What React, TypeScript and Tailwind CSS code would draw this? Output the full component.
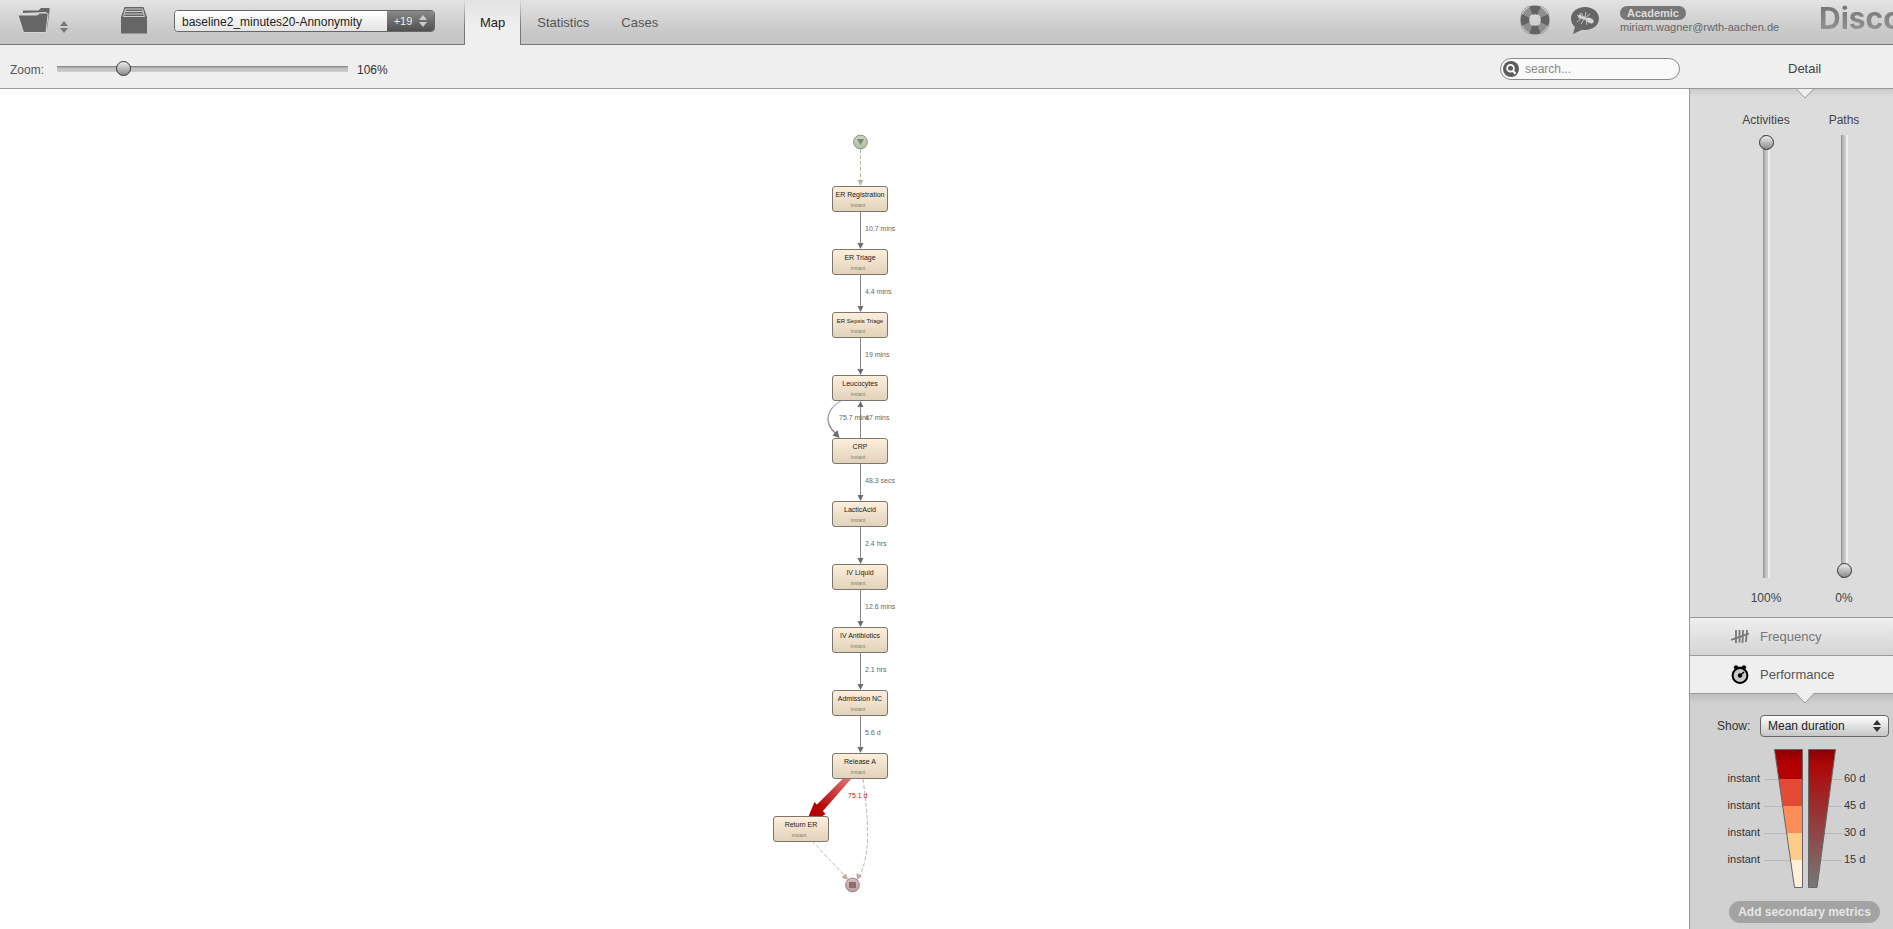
import { useState } from "react";

type ActivityNode = { name: string; x: number; y: number; small?: boolean };
type EdgeLabel = { text: string; x: number; y: number; strong?: boolean };

const nodes: ActivityNode[] = [
  { name: "ER Registration", x: 60, y: 97 },
  { name: "ER Triage", x: 60, y: 160 },
  { name: "ER Sepsis Triage", x: 60, y: 223, small: true },
  { name: "Leucocytes", x: 60, y: 286 },
  { name: "CRP", x: 60, y: 349 },
  { name: "LacticAcid", x: 60, y: 412 },
  { name: "IV Liquid", x: 60, y: 475 },
  { name: "IV Antibiotics", x: 60, y: 538 },
  { name: "Admission NC", x: 60, y: 601 },
  { name: "Release A", x: 60, y: 664 },
  { name: "Return ER", x: 1, y: 727 },
];

const edgeLabels: EdgeLabel[] = [
  { text: "10.7 mins", x: 93, y: 136 },
  { text: "4.4 mins", x: 93, y: 199 },
  { text: "19 mins", x: 93, y: 262 },
  { text: "75.7 mins", x: 67, y: 325 },
  { text: "47 mins", x: 93, y: 325 },
  { text: "48.3 secs", x: 93, y: 388 },
  { text: "2.4 hrs", x: 93, y: 451 },
  { text: "12.6 mins", x: 93, y: 514 },
  { text: "2.1 hrs", x: 93, y: 577 },
  { text: "5.6 d", x: 93, y: 640 },
  { text: "75.1 d", x: 76, y: 703, strong: true },
];

const straightEdges = [
  [123, 160],
  [186, 223],
  [249, 286],
  [375, 412],
  [438, 475],
  [501, 538],
  [564, 601],
  [627, 664],
];

function FolderIcon() {
  return (
    <svg width="32" height="26" viewBox="0 0 32 26" fill="#666" aria-hidden="true">
      <path d="M5 5V2.500h15.500L23 0h8.500v3L29 22 28 4z" />
      <path d="M0 7h19.500l2-2H29l1 1.500L28 24.500H5.500z" stroke="#d6d6d6" />
    </svg>
  );
}

function ArchiveIcon() {
  return (
    <svg width="26" height="27" viewBox="0 0 26 27" aria-hidden="true">
      <path d="M3.500 0h19L26 10v16.500H0V10z" fill="#666" />
      <path d="M4.500 2h17M4 4.500h18M3.500 7h19M2.500 9.500h21" stroke="#cfcfcf" fill="none" />
      <path d="M4.500 2 2.500 9.500M21.500 2l2 7.500" stroke="#cfcfcf" />
    </svg>
  );
}

function UpDown({ className }: { className: string }) {
  return (
    <svg width="8" height="12" viewBox="0 0 8 12" className={className} fill="currentColor" aria-hidden="true">
      <path d="M4 0l4 5H0zM4 12l4-5H0z" />
    </svg>
  );
}

function LifebuoyIcon() {
  return (
    <svg width="30" height="30" viewBox="0 0 30 30" fill="none" aria-hidden="true">
      <rect x="1" y="1" width="28" height="28" rx="11" stroke="#999" />
      <circle cx="15" cy="15" r="10" stroke="#8f8f8f" strokeWidth="7.500" />
      <path
        d="M11 5.800a10 10 0 0 1 8 0M24.200 11a10 10 0 0 1 0 8M19 24.200a10 10 0 0 1-8 0M5.800 19a10 10 0 0 1 0-8"
        stroke="#636363"
        strokeWidth="8.500"
      />
    </svg>
  );
}

function BugBubbleIcon() {
  return (
    <svg width="28" height="27" viewBox="0 0 28 27" fill="none" aria-hidden="true">
      <path d="M14 0c8 0 14 5 14 11.500S22 23 14 23c-1 0-2 0-3-.3L2 27l2-7C1.500 18 0 15 0 11.500 0 5 6 0 14 0z" fill="#666" />
      <path
        d="M12 10 10.500 6M14 10l1-5M15 10l4-3M11 11l-5 4M13 12l-3 5M15 13l1 5M8 9 6 8M9 8l.5-2"
        stroke="#d6d6d6"
        strokeWidth="0.800"
      />
      <g fill="#d6d6d6">
        <circle cx="9" cy="9.700" r="1.900" />
        <ellipse cx="13" cy="11" rx="2.800" ry="1.500" transform="rotate(18 13 11)" />
        <ellipse cx="18.800" cy="13.500" rx="4" ry="2.500" transform="rotate(24 18.800 13.500)" />
      </g>
    </svg>
  );
}

function SearchIcon() {
  return (
    <svg width="16" height="16" viewBox="0 0 16 16" fill="none" className="shrink-0" aria-hidden="true">
      <circle cx="8" cy="8" r="8" fill="#5c5c5c" />
      <circle cx="7.500" cy="7.300" r="3.400" stroke="#fff" strokeWidth="1.800" />
      <path d="m10 10 2.500 2.700" stroke="#fff" strokeWidth="2" />
    </svg>
  );
}

function TallyIcon() {
  return (
    <svg width="18" height="15" viewBox="0 0 18 15" fill="none" stroke="#777" aria-hidden="true">
      <path d="M5 1v13M8.500 1v12.500M12 1l-.5 13M16 1l-1 12" strokeWidth="1.800" />
      <path d="M0 11 18 4.500" strokeWidth="1.800" />
    </svg>
  );
}

function StopwatchIcon() {
  return (
    <svg width="18" height="19" viewBox="0 0 18 19" fill="none" aria-hidden="true">
      <circle cx="5" cy="2.300" r="2.100" fill="#000" />
      <circle cx="13" cy="2.300" r="2.100" fill="#000" />
      <path d="M5 2.500h8" stroke="#000" strokeWidth="1.500" />
      <circle cx="9" cy="10.500" r="7.400" fill="#c9c9c9" stroke="#000" strokeWidth="2" />
      <circle cx="9" cy="10.500" r="2.200" fill="#000" />
      <path d="M9 10.500 13 7" stroke="#000" strokeWidth="1.500" />
    </svg>
  );
}

function Notch() {
  return (
    <svg
      width="20"
      height="11"
      viewBox="0 0 20 11"
      className="absolute -top-px left-1/2 -translate-x-1/2"
      aria-hidden="true"
    >
      <path d="M1 0h18l-9 10z" fill="#efefef" />
      <path d="M1 .5l9 9.500 9-9.500" fill="none" stroke="#999" />
    </svg>
  );
}

function ProcessMap() {
  return (
    <div className="relative h-[820px] w-[145px]">
      <svg width="145" height="820" viewBox="0 0 145 820" fill="none" className="absolute inset-0" aria-hidden="true">
        <defs>
          <linearGradient id="start" x1="0" y1="0" x2="0" y2="1">
            <stop offset="0" stopColor="#ccd4bd" />
            <stop offset="1" stopColor="#b3bda3" />
          </linearGradient>
          <linearGradient id="end" x1="0" y1="0" x2="0" y2="1">
            <stop offset="0" stopColor="#d8bcbc" />
            <stop offset="1" stopColor="#bf9f9f" />
          </linearGradient>
          <linearGradient id="hot" gradientUnits="userSpaceOnUse" x1="76" y1="688" x2="48" y2="720">
            <stop offset="0" stopColor="#de7474" />
            <stop offset="1" stopColor="#b40000" />
          </linearGradient>
          <linearGradient id="loop" x1="0" y1="0" x2="0" y2="1">
            <stop offset="0" stopColor="#bbb" />
            <stop offset="1" stopColor="#6c6c6c" />
          </linearGradient>
        </defs>

        <circle cx="88.500" cy="53" r="6.900" fill="url(#start)" stroke="#8c9482" />
        <path d="M85 50h7l-3.500 6z" fill="#7f8771" />
        <path d="M88.500 60v31" stroke="#aebb9c" strokeDasharray="4 2" />
        <path d="M85.500 91h6l-3 6z" fill="#aebb9c" />

        {straightEdges.map(([from, to]) => (
          <g key={from}>
            <path d={`M88.500 ${from}V${to - 5}`} stroke="#8a8a8a" />
            <path d={`M85.500 ${to - 6}h6l-3 6z`} fill="#6c6c6c" />
          </g>
        ))}

        <path d="M88.500 349v-32" stroke="#8a8a8a" />
        <path d="M85.500 318h6l-3-6z" fill="#6c6c6c" />
        <path d="M70 311C53 321 52 334 64 345" stroke="url(#loop)" strokeWidth="1.200" />
        <path d="m60.500 346.500 5-5.500 2 8z" fill="#6c6c6c" />

        <path d="M71.500 689h8.500L50.500 722.500l-6.500-6z" fill="url(#hot)" />
        <path d="M42.500 713l11 12-9 6H35z" fill="#b40000" />

        <path d="M40 752 74 788" stroke="#c6b4b0" strokeDasharray="4 2" />
        <path d="m76 791-6.500-2.500 4.500-4z" fill="#bba9a4" />
        <path d="M91 690C97 735 98 766 88 786" stroke="#c6b0b0" strokeDasharray="4 2" />
        <path d="m85 791-.5-7 5.500 3z" fill="#bba9a4" />
        <circle cx="80.500" cy="796" r="6.900" fill="url(#end)" stroke="#988888" />
        <rect x="77" y="793" width="7" height="6" fill="#8d6e6e" />
      </svg>

      {nodes.map((node) => (
        <div
          key={node.name}
          className="absolute flex h-[26px] w-14 flex-col items-center rounded-[3px] border border-[#7d766c] bg-linear-to-b from-[#fdefdc] to-[#e2d2bb] pt-1"
          style={{ left: node.x, top: node.y }}
        >
          <span className={`whitespace-nowrap leading-[8px] text-[#222] ${node.small ? "text-[6px]" : "text-[7px]"}`}>
            {node.name}
          </span>
          <span className="pt-[3px] pr-1 text-[5px] leading-[6px] text-[#857b6f]">instant</span>
        </div>
      ))}

      {edgeLabels.map((label) => (
        <span
          key={label.text}
          className={`absolute whitespace-nowrap text-[7px] leading-[8px] ${
            label.strong ? "text-[#b02020]" : "text-[#666]"
          }`}
          style={{ left: label.x, top: label.y }}
        >
          {label.text}
        </span>
      ))}
    </div>
  );
}

const thumb =
  "[&::-webkit-slider-thumb]:appearance-none [&::-webkit-slider-thumb]:size-[15px] [&::-webkit-slider-thumb]:rounded-full [&::-webkit-slider-thumb]:border [&::-webkit-slider-thumb]:border-[#333] [&::-webkit-slider-thumb]:bg-linear-to-b [&::-webkit-slider-thumb]:from-[#eee] [&::-webkit-slider-thumb]:to-[#8c8c8c]";

function DetailSlider({ label, initial }: { label: string; initial: number }) {
  const [value, setValue] = useState(initial);
  return (
    <label className="flex w-[78px] flex-col items-center leading-4 text-[#444]">
      {label}
      <input
        type="range"
        min={0}
        max={100}
        value={value}
        onChange={(e) => setValue(Number(e.target.value))}
        className={`mt-[7px] mb-[12px] h-[443px] w-[15px] appearance-none bg-[linear-gradient(to_right,transparent_4px,#8a8a8a_4px,#bcbcbc_6px,#cfcfcf_9px,#eee_9px,#eee_11px,transparent_11px)] [direction:rtl] [writing-mode:vertical-lr] ${thumb}`}
      />
      <span>{value}%</span>
    </label>
  );
}

const bands = [
  { fill: "url(#dark-red)", y: 1, h: 30 },
  { fill: "#e34a33", y: 31, h: 27 },
  { fill: "#fc8d59", y: 58, h: 27 },
  { fill: "#fdcc8a", y: 85, h: 27 },
  { fill: "#fef0d9", y: 112, h: 28 },
];

function Legend() {
  return (
    <div className="flex text-[11px] leading-[27px] text-[#333]">
      <ul className="w-[70px] pt-[17px] text-right">
        {[0, 1, 2, 3].map((i) => (
          <li key={i}>instant</li>
        ))}
      </ul>
      <svg width="79" height="141" viewBox="0 0 79 141" className="mr-px ml-1 shrink-0" aria-hidden="true">
        <defs>
          <linearGradient id="dark-red" x1="0" y1="0" x2="0" y2="1">
            <stop offset="0" stopColor="#8a0000" />
            <stop offset="0.500" stopColor="#b30000" />
          </linearGradient>
          <linearGradient id="heat" x1="0" y1="0" x2="0" y2="1">
            <stop offset="0" stopColor="#8a0000" />
            <stop offset="0.120" stopColor="#ad0808" />
            <stop offset="1" stopColor="#777" />
          </linearGradient>
          <clipPath id="funnel">
            <path d="M10.500 1h28v138.500h-8z" />
          </clipPath>
        </defs>
        <path d="M0 31.500h78M0 58.500h78M0 85.500h78M0 112.500h78" stroke="#b8b8b8" />
        <path d="M38 0h8v141h-8z" fill="#d1d1d1" />
        <g clipPath="url(#funnel)">
          {bands.map((b) => (
            <rect key={b.y} x="10" y={b.y} width="30" height={b.h} fill={b.fill} />
          ))}
        </g>
        <path d="M10.500 1.500h28v138h-8z" fill="none" stroke="#666" />
        <path d="M44.500 1.500h27L53 139.500h-8.500z" fill="url(#heat)" stroke="#666" />
      </svg>
      <ul className="pt-[17px]">
        {["60 d", "45 d", "30 d", "15 d"].map((t) => (
          <li key={t}>{t}</li>
        ))}
      </ul>
    </div>
  );
}

function Header() {
  return (
    <header className="flex h-[45px] border-b border-[#777] bg-linear-to-b from-[#e3e3e3] to-[#c6c6c6] to-80%">
      <button type="button" aria-label="Open project" className="ml-[18px] flex items-start pt-2 text-[#777]">
        <FolderIcon />
        <UpDown className="mt-[13px] ml-[10px]" />
      </button>
      <button type="button" aria-label="Archive" className="ml-[53px] flex items-start pt-[7px]">
        <ArchiveIcon />
      </button>
      <div className="mt-[10px] ml-[27px] flex h-[22px] w-[261px] shrink-0 overflow-hidden rounded-[4px] border border-[#666]">
        <select
          aria-label="Data set"
          className="min-w-0 grow appearance-none bg-linear-to-b from-white to-[#e4e4e4] pt-px pl-[7px] text-[#222]"
        >
          <option>baseline2_minutes20-Annonymity</option>
        </select>
        <button
          type="button"
          className="flex w-[47px] items-center justify-center gap-[7px] bg-linear-to-b from-[#8a8a8a] to-[#505050] text-[11px] text-[#eee]"
        >
          +19
          <UpDown className="text-[#ccc]" />
        </button>
      </div>
      <nav className="ml-[29px] flex text-[13px] text-[#555]">
        <a
          href="#map"
          className="flex h-[45px] bg-linear-to-b from-[#dcdcdc] to-[#777] to-60% px-px text-[#222]"
        >
          <span className="bg-linear-to-b from-[#e3e3e3] to-[#efefef] to-60% px-[15px] pt-[13px] leading-5">Map</span>
        </a>
        <a href="#statistics" className="pt-[13px] pl-4 leading-5">
          Statistics
        </a>
        <a href="#cases" className="pt-[13px] pl-8 leading-5">
          Cases
        </a>
      </nav>
      <div className="ml-auto flex w-[373px] shrink-0 items-start overflow-hidden">
        <button type="button" aria-label="Help" className="pt-[5px]">
          <LifebuoyIcon />
        </button>
        <button type="button" aria-label="Feedback" className="ml-[21px] pt-[7px]">
          <BugBubbleIcon />
        </button>
        <div className="ml-[21px] w-[199px] shrink-0 pt-[6px] text-[11px] text-[#666]">
          <div className="w-fit rounded-full bg-[#777] px-[7px] leading-[14px] font-bold text-[#ddd]">Academic</div>
          <div className="leading-[14px]">miriam.wagner@rwth-aachen.de</div>
        </div>
        <div className="bg-linear-to-b from-[#707070] to-[#999] bg-clip-text font-[Inter] text-[30px] leading-9 font-bold text-transparent">
          Disco
        </div>
      </div>
    </header>
  );
}

function Toolbar() {
  const [zoom, setZoom] = useState(106);
  return (
    <div className="flex h-11 items-center border-b border-[#999] bg-[#efefef] pt-[4px] pl-[10px]">
      <label htmlFor="zoom" className="w-[47px] pt-[2px] text-[#555]">
        Zoom:
      </label>
      <input
        id="zoom"
        type="range"
        min={0}
        max={500}
        value={zoom}
        onChange={(e) => setZoom(Number(e.target.value))}
        className={`h-[15px] w-[291px] appearance-none bg-[linear-gradient(to_bottom,transparent_5px,#7c7c7c_5px,#bcbcbc_7px,#cfcfcf_11px,transparent_11px)] ${thumb}`}
      />
      <output htmlFor="zoom" className="pt-[2px] pl-[9px]">
        {zoom}%
      </output>
      <label className="ml-auto flex h-[22px] w-[180px] items-center gap-[6px] rounded-full border border-[#8a8a8a] bg-[#fafafa] pl-[2px]">
        <SearchIcon />
        <input
          type="search"
          aria-label="Search"
          placeholder="search..."
          className="min-w-0 grow bg-transparent pt-px outline-none placeholder:text-[#888]"
        />
      </label>
      <h2 className="ml-[10px] w-[203px] shrink-0 pl-[98px] text-[13px] text-[#444]">Detail</h2>
    </div>
  );
}

function Sidebar() {
  return (
    <aside className="w-[204px] shrink-0 overflow-hidden border-l border-[#999] bg-[#d1d1d1]">
      <div className="w-[230px]">
        <section className="relative h-[528px] bg-linear-to-b from-[#cbcbcb] to-[#dcdcdc] to-[8px]">
          <Notch />
          <div className="flex pt-[23px] pl-[37px]">
            <DetailSlider label="Activities" initial={100} />
            <DetailSlider label="Paths" initial={0} />
          </div>
        </section>
        <button
          type="button"
          className="flex h-[38px] w-full items-center gap-[11px] border-t border-[#999] bg-linear-to-b from-[#efefef] to-[#d4d4d4] pl-[41px] text-[13px] text-[#777]"
        >
          <TallyIcon />
          Frequency
        </button>
        <button
          type="button"
          className="flex h-[39px] w-full items-center gap-[11px] border-y border-[#999] bg-[#efefef] pl-[41px] text-[13px] text-[#555]"
        >
          <StopwatchIcon />
          Performance
        </button>
        <section className="relative bg-linear-to-b from-[#bfbfbf] to-[#d1d1d1] to-[10px] pt-[21px]">
          <Notch />
          <div className="flex items-center pb-[11px] pl-[27px]">
            <label htmlFor="metric" className="w-[43px]">
              Show:
            </label>
            <div className="relative">
              <select
                id="metric"
                className="block h-[22px] w-[129px] appearance-none rounded-[4px] border border-[#666] bg-linear-to-b from-white to-[#c6c6c6] pl-[7px] text-[#222]"
              >
                <option>Mean duration</option>
              </select>
              <UpDown className="pointer-events-none absolute top-[5px] right-2" />
            </div>
          </div>
          <Legend />
          <button
            type="button"
            className="mt-[12px] ml-[39px] h-[22px] w-[151px] rounded-full bg-[#a3a3a3] font-bold text-[#e6e6e6]"
          >
            Add secondary metrics
          </button>
        </section>
      </div>
    </aside>
  );
}

export default function App() {
  return (
    <div className="flex min-h-screen flex-col overflow-hidden bg-white font-['Liberation_Sans',Arial,sans-serif] text-xs text-[#333]">
      <Header />
      <Toolbar />
      <div className="flex grow">
        <main className="flex grow justify-center">
          <ProcessMap />
        </main>
        <Sidebar />
      </div>
    </div>
  );
}
